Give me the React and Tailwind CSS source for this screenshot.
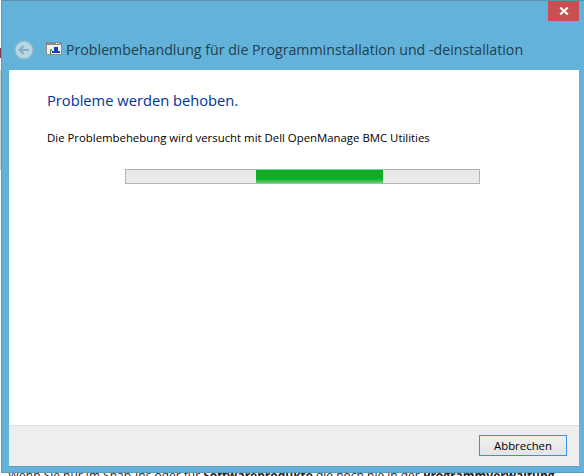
export default function App() {
  return (
    <div className="w-[584px] h-[476px] overflow-hidden bg-white flex flex-col font-['Noto_Sans',sans-serif]">
      <div className="h-[473px] shrink-0 flex bg-[#62b2d9]">
        <div className="w-[1px] h-full bg-white flex flex-col">
          <div className="h-[48px]" />
          <div className="h-[10px] bg-[#7a3b48]" />
          <div className="h-[12px]" />
          <div className="h-[100px] bg-[#cfcfcf]" />
        </div>
        <div className="flex-1 min-w-0 flex flex-col border-l border-t border-b border-[#5a9dbf] border-t-[#5a93b0]">
          <div className="h-[69px] shrink-0 flex flex-col">
            <div className="flex justify-end pr-[5px]">
              <div className="w-[31px] h-[20px] bg-[#c75050] flex items-center justify-center">
                <svg width="10" height="8" viewBox="0 0 10 8">
                  <path d="M1.2 0.5 L8.8 7.5 M8.8 0.5 L1.2 7.5" stroke="#fff" strokeWidth="2" fill="none" />
                </svg>
              </div>
            </div>
            <div className="flex items-center pl-[12px] mt-[16px] h-[26px]">
              <svg width="20" height="20" viewBox="0 0 20 20" className="shrink-0">
                <circle cx="10" cy="10" r="9" fill="#b5d7e6" stroke="#92b5c7" strokeWidth="1.3" />
                <path d="M15 10 H6 M9.5 6 L5.5 10 L9.5 14" stroke="#8fa9b8" strokeWidth="2" fill="none" />
              </svg>
              <svg width="16" height="14" viewBox="0 0 16 14" className="shrink-0 ml-[12px] mb-[2px]">
                <rect x="0.5" y="0.5" width="15" height="12" fill="#f2f2f2" stroke="#8a8a8a" />
                <rect x="0.5" y="0.5" width="15" height="2.5" fill="#8a8a8a" />
                <rect x="10" y="1" width="1" height="1" fill="#fff" />
                <rect x="12" y="1" width="1" height="1" fill="#fff" />
                <path d="M8 5 H12 V9 H14 V11 H6 V9 H8 Z" fill="#1440b0" />
                <rect x="4" y="7" width="2" height="2" fill="#3dbb3d" />
                <rect x="4" y="9" width="1" height="3" fill="#555" />
              </svg>
              <span className="ml-[4px] text-[14.2px] leading-none text-[#24404f] whitespace-nowrap font-['Open_Sans',sans-serif]">
                Problembehandlung für die Programminstallation und -deinstallation
              </span>
            </div>
          </div>
          <div className="flex-1 min-h-0 flex flex-col ml-[7px] mr-[5px] mb-[5px] border-b border-[#5a9dbf]">
            <div className="flex-1 bg-white pl-[38px] pr-[45px] flex flex-col">
              <div className="mt-[20px] text-[14.7px] leading-[20px] text-[#003399] font-['Open_Sans',sans-serif]">Probleme werden behoben.</div>
              <div className="mt-[20px] text-[11.38px] leading-[16px] text-black font-['Open_Sans',sans-serif] whitespace-nowrap">
                Die Problembehebung wird versucht mit Dell OpenManage BMC Utilities
              </div>
              <div className="mt-[23px] ml-[78px] w-[355px] h-[15px] border border-[#b2b2b2] bg-gradient-to-b from-[#e6e6e6] to-[#ececec] pl-[130px]">
                <div className="w-[127px] h-full bg-gradient-to-b from-[#06b025] from-70% to-[#5fce75]" />
              </div>
            </div>
            <div className="h-[41px] shrink-0 bg-[#eeeeee] border-t border-[#dfdfdf] flex justify-end items-start pt-[9px] pr-[12px]">
              <div className="w-[88px] h-[21px] border border-[#3c8ee8] bg-gradient-to-b from-[#f0f0f0] to-[#e5e5e5] flex items-center justify-center text-[11.4px] leading-none text-black font-['Open_Sans',sans-serif]">
                Abbrechen
              </div>
            </div>
          </div>
        </div>
      </div>
      <div className="h-[3px] overflow-hidden bg-white">
        <div className="-mt-[4px] pl-[8px] text-[12px] leading-[14px] text-[#222] whitespace-nowrap font-['Open_Sans',sans-serif]">
          Wenn Sie nur im Snap-Ins oder für <b>Softwareprodukte</b> die noch nie in der <b>Programmverwaltung</b>
        </div>
      </div>
    </div>
  );
}
